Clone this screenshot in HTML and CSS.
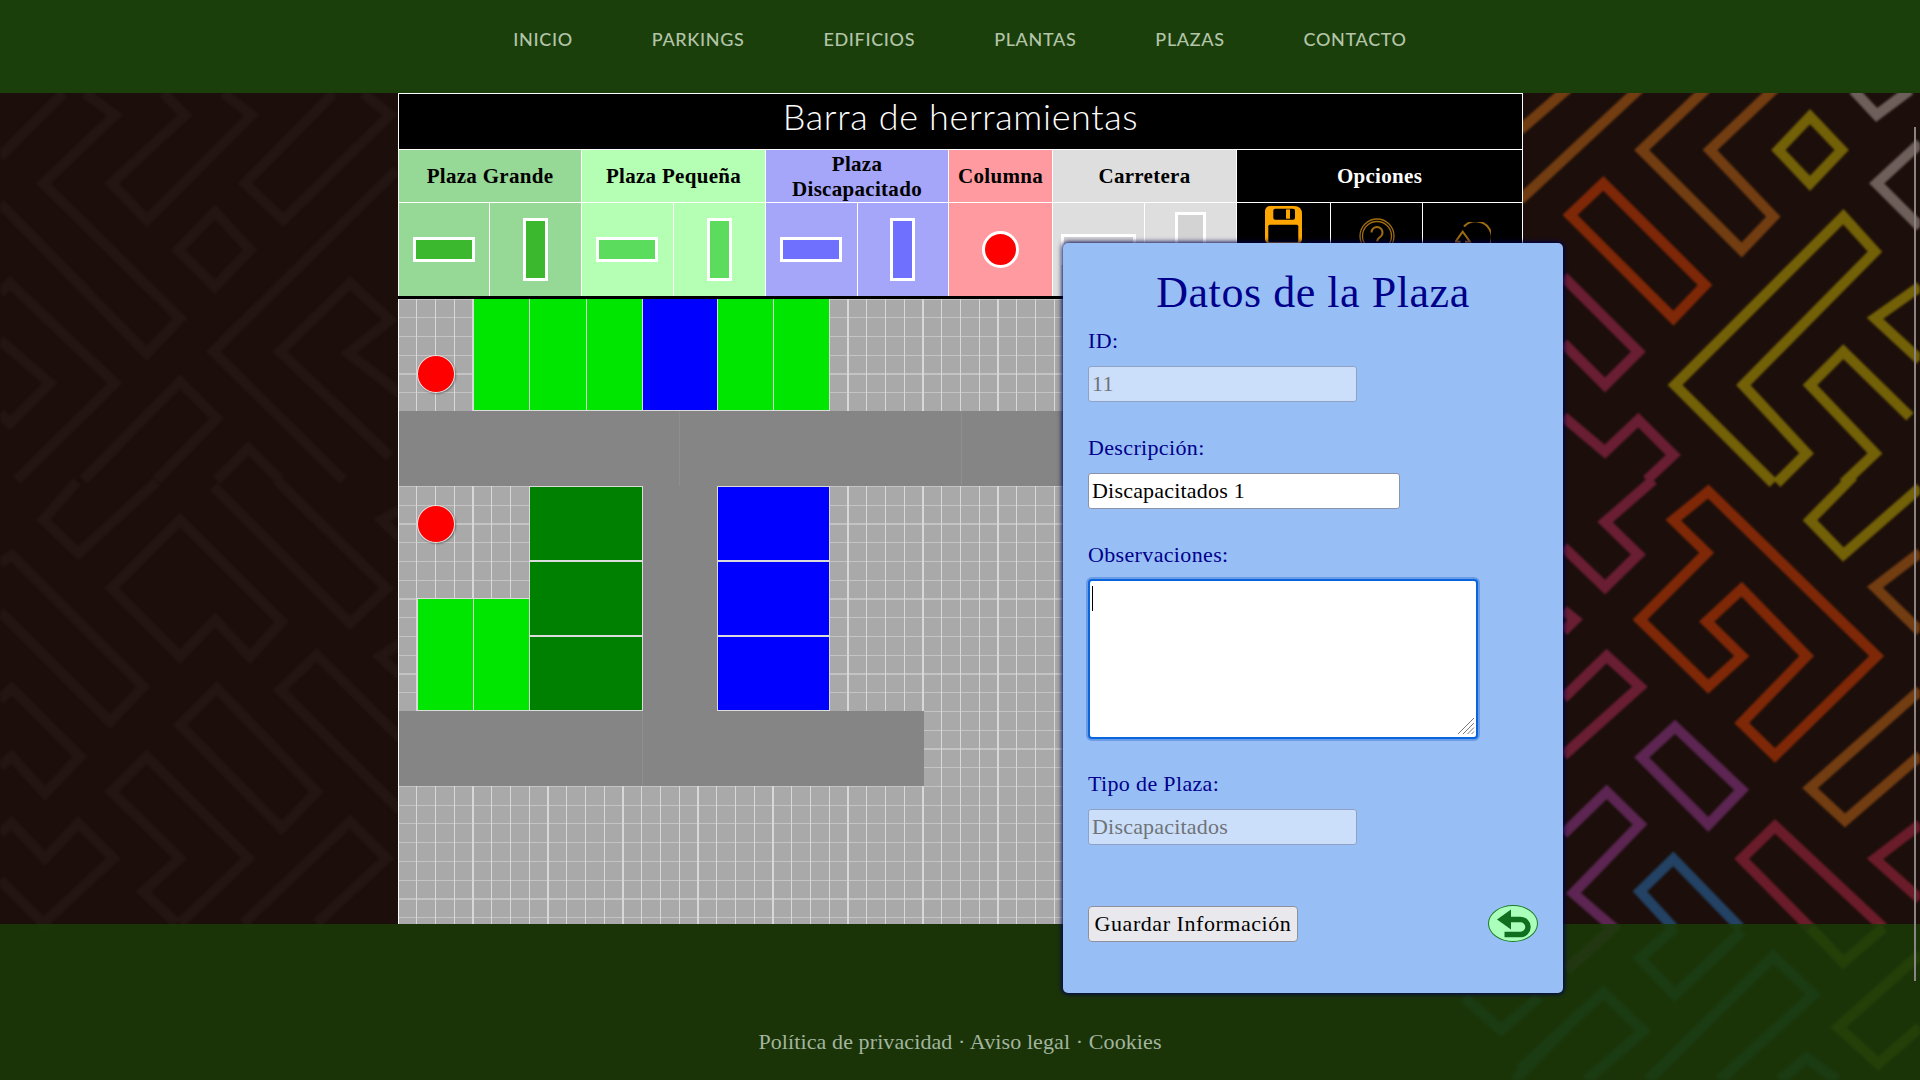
FILE: index.html
```html
<!DOCTYPE html>
<html lang="es">
<head>
<meta charset="utf-8">
<title>Datos de la Plaza</title>
<link rel="stylesheet" href="styles.css">
</head>
<body>
<svg class="pattern" width="1920" height="1080" viewBox="0 0 1920 1080" aria-hidden="true">
  <g class="faint" transform="translate(0 80) scale(.33333)">
    <polyline points="255,40 345,105 130,310 540,715 440,820 0,370"/>
    <polyline points="490,40 555,105 335,310 440,420 755,105 670,40"/>
    <polyline points="190,40 0,230"/>
    <polygon points="645,395 750,510 645,620 535,510"/>
    <polyline points="1000,40 735,310 850,420 1170,105 1090,40"/>
    <polyline points="1190,270 640,815 1030,1200"/>
    <polyline points="1200,940 1045,820 1170,720 1050,610 840,815 1170,1130"/>
    <polyline points="0,640 30,610 345,910 50,1200"/>
    <polyline points="0,780 150,910 30,1030 0,1000"/>
    <polyline points="250,1200 540,905 650,1015 470,1200"/>
    <polyline points="650,1200 745,1105 840,1200"/>
  </g>
  <g class="faint" transform="translate(0 480) scale(.33333)">
    <polyline points="230,5 130,120 235,220 470,5"/>
    <polyline points="0,250 35,225 430,620 330,725 0,395"/>
    <polygon points="540,120 335,325 540,530 645,420 750,530 845,425"/>
    <polyline points="640,20 1050,430 1160,325 830,0"/>
    <polyline points="1200,90 1145,120 1200,175"/>
    <polyline points="1200,990 840,630 950,525 1200,775"/>
    <polyline points="1200,490 1140,530 1200,585"/>
    <polygon points="650,625 540,735 845,1045 950,935"/>
    <polyline points="0,660 35,625 240,830 135,940 35,830 0,860"/>
    <polyline points="530,1330 430,1235 540,1135 335,935 440,830 745,1135 540,1330"/>
    <polyline points="730,1330 1050,1025 1160,1135 950,1330"/>
    <polyline points="0,1060 35,1030 135,1135 235,1030 340,1135 130,1330 0,1200"/>
  </g>
  <g transform="translate(1520 80) scale(.33333)">
    <polyline class="brown" points="565,20 365,210 665,510 760,410 570,210 770,20"/>
    <polyline class="brown" points="150,20 0,150"/>
    <polyline class="brown" points="365,20 0,360"/>
    <polygon class="red" points="250,310 150,405 460,715 555,615"/>
    <polygon class="olive" points="870,110 965,210 870,310 775,210"/>
    <polyline class="gray" points="1000,30 1070,105 1170,30"/>
    <polyline class="gray" points="1200,190 1070,310 1200,440"/>
    <polyline class="olive" points="770,1210 860,1120 670,915 1065,515 970,410 465,915 760,1210"/>
    <polyline class="olive" points="970,1210 1065,1120 870,915 970,815 1170,1010"/>
    <polyline class="olive" points="1200,620 1065,715 1200,840"/>
    <polyline class="magenta" points="130,590 355,815 255,915 130,790"/>
    <polyline class="magenta" points="130,1010 255,1115 355,1020 460,1125 380,1200"/>
  </g>
  <g transform="translate(1520 480) scale(.33333 .38265)">
    <polyline class="magenta" points="400,0 255,110 355,195 255,280 130,175"/>
    <polyline class="magenta" points="130,340 165,365 130,395"/>
    <polyline class="magenta" points="130,570 260,460 360,540 130,720"/>
    <polygon class="red" points="565,30 460,105 560,190 360,365 565,540 665,460 560,370 665,285 860,460 665,635 765,720 1070,460"/>
    <polyline class="olive" points="1000,-10 870,105 970,195 1200,20"/>
    <polyline class="brown" points="1200,190 1065,280 1200,395"/>
    <polyline class="brown" points="1200,550 870,805 975,890 1200,720"/>
    <polygon class="purple" points="465,645 365,725 565,900 665,810"/>
    <polyline class="purple" points="130,925 260,815 360,900 160,1080 280,1170 140,1280"/>
    <polyline class="blue" points="460,1170 360,1075 460,990 660,1170"/>
    <polyline class="darkred" points="870,1170 665,990 765,905 1090,1170"/>
    <polyline class="darkred" points="1200,900 1065,990 1200,1095"/>
    <polyline class="blue" points="465,1170 360,1250 465,1345 665,1180"/>
    <polyline class="blue" points="385,1568 760,1245 880,1345 600,1568"/>
    <polyline class="blue" points="0,1540 250,1340 370,1440 200,1568"/>
    <polyline class="blue" points="780,1568 860,1510 950,1568"/>
    <polyline class="olive" points="1200,1240 955,1430 1075,1525 1200,1430"/>
    <polyline class="olive" points="870,1170 970,1260 1090,1170"/>
  </g>
  <polyline class="blue" points="1464,997 1501,1030 1539,997"/>
  <polyline class="blue" points="1580,1013 1515,1080"/>
</svg>

<header class="site-header">
  <nav class="nav">
    <a class="nav-link">INICIO</a>
    <a class="nav-link">PARKINGS</a>
    <a class="nav-link">EDIFICIOS</a>
    <a class="nav-link">PLANTAS</a>
    <a class="nav-link">PLAZAS</a>
    <a class="nav-link">CONTACTO</a>
  </nav>
</header>

<main class="main">
  <section class="editor">
    <h1 class="toolbar-title">Barra de herramientas</h1>
    <div class="toolbar">
      <div class="head big span2">Plaza Grande</div>
      <div class="head small span2">Plaza Pequeña</div>
      <div class="head disabled span2">Plaza Discapacitado</div>
      <div class="head column">Columna</div>
      <div class="head road span2">Carretera</div>
      <div class="head options span3">Opciones</div>

      <div class="tool big"><span class="shape horiz fill-big"></span></div>
      <div class="tool big"><span class="shape vert fill-big"></span></div>
      <div class="tool small"><span class="shape horiz fill-small"></span></div>
      <div class="tool small"><span class="shape vert fill-small"></span></div>
      <div class="tool disabled"><span class="shape horiz fill-disabled"></span></div>
      <div class="tool disabled"><span class="shape vert fill-disabled"></span></div>
      <div class="tool column"><span class="shape dot"></span></div>
      <div class="tool road"><span class="shape road-h"></span></div>
      <div class="tool road"><span class="shape road-v"></span></div>
      <div class="tool options top">
        <svg class="icon-save" width="37" height="38" viewBox="0 0 37 38">
          <path class="save-body" d="M5 0H29Q37 0 37 8V33a5 5 0 0 1-5 5H5a5 5 0 0 1-5-5V5a5 5 0 0 1 5-5Z"/>
          <rect class="save-hole" x="8.3" y="2.7" width="21.7" height="11" rx="2"/>
          <rect class="save-body" x="21" y="3.4" width="4" height="9.3"/>
          <rect class="save-hole" x="3.3" y="18.7" width="30" height="17.5" rx="1.5"/>
        </svg>
      </div>
      <div class="tool options top">
        <svg class="icon-help" width="36" height="36" viewBox="0 0 36 36">
          <circle class="line" cx="18" cy="18" r="17"/>
          <circle class="line" cx="18" cy="18" r="14.5"/>
          <path class="line thick" d="M12.5 14.5a5.5 5.5 0 1 1 8.6 4.5c-2.2 1.5-3 2.400-3 4.500"/>
        </svg>
      </div>
      <div class="tool options top">
        <svg class="icon-reset" width="36" height="36" viewBox="0 0 36 36">
          <path class="line thick" d="M9 4.500A16 16 0 1 1 24 31"/>
          <path class="line thick" d="M7.700 9.700 .5 19.700H4.500V30H11V19.700H15Z"/>
        </svg>
      </div>
    </div>

    <div class="canvas">
      <div class="item road-item" style="--c:0;--r:6;--w:15;--h:4"></div>
      <div class="item road-item" style="--c:15;--r:6;--w:15;--h:4"></div>
      <div class="item road-item" style="--c:30;--r:6;--w:15;--h:4"></div>
      <div class="item road-item" style="--c:13;--r:10;--w:4;--h:12"></div>
      <div class="item road-item" style="--c:0;--r:22;--w:13;--h:4"></div>
      <div class="item road-item" style="--c:13;--r:22;--w:15;--h:4"></div>

      <div class="item bay lime" style="--c:4;--r:0;--w:3;--h:6"></div>
      <div class="item bay lime" style="--c:7;--r:0;--w:3;--h:6"></div>
      <div class="item bay lime" style="--c:10;--r:0;--w:3;--h:6"></div>
      <div class="item bay deep" style="--c:13;--r:0;--w:4;--h:6"></div>
      <div class="item bay lime" style="--c:17;--r:0;--w:3;--h:6"></div>
      <div class="item bay lime" style="--c:20;--r:0;--w:3;--h:6"></div>

      <div class="item bay green" style="--c:7;--r:10;--w:6;--h:4"></div>
      <div class="item bay green" style="--c:7;--r:14;--w:6;--h:4"></div>
      <div class="item bay green" style="--c:7;--r:18;--w:6;--h:4"></div>
      <div class="item bay deep" style="--c:17;--r:10;--w:6;--h:4"></div>
      <div class="item bay deep" style="--c:17;--r:14;--w:6;--h:4"></div>
      <div class="item bay deep" style="--c:17;--r:18;--w:6;--h:4"></div>
      <div class="item bay lime" style="--c:1;--r:16;--w:3;--h:6"></div>
      <div class="item bay lime" style="--c:4;--r:16;--w:3;--h:6"></div>

      <div class="item pillar" style="--c:1;--r:3;--w:2;--h:2"></div>
      <div class="item pillar" style="--c:1;--r:11;--w:2;--h:2"></div>
    </div>
  </section>

  <form class="modal">
    <h2 class="modal-title">Datos de la Plaza</h2>
    <div class="field">
      <label class="label" for="f-id">ID:</label>
      <input class="input input-short" id="f-id" value="11" disabled>
    </div>
    <div class="field">
      <label class="label" for="f-desc">Descripción:</label>
      <input class="input input-mid" id="f-desc" value="Discapacitados 1">
    </div>
    <div class="field field-area">
      <label class="label" for="f-obs">Observaciones:</label>
      <div class="area-wrap">
        <textarea class="area" id="f-obs"></textarea>
        <span class="caret"></span>
        <svg class="grip" width="18" height="18" viewBox="0 0 18 18">
          <path d="M1 17 17 1M6 17 17 6M10.500 17 17 10.500M14.500 17 17 14.500"/>
        </svg>
      </div>
    </div>
    <div class="field field-last">
      <label class="label" for="f-type">Tipo de Plaza:</label>
      <input class="input input-short" id="f-type" value="Discapacitados" disabled>
    </div>
    <div class="actions">
      <button class="save" type="button">Guardar Información</button>
      <button class="back" type="button" aria-label="Volver">
        <svg width="50" height="37" viewBox="0 0 50 37">
          <path class="back-arrow" d="M22 14.500H32.500a7.500 7.500 0 0 1 0 15H16.500"/>
          <polygon class="back-head" points="9,14.500 23,4.500 23,24.500"/>
        </svg>
      </button>
    </div>
  </form>
</main>

<footer class="site-footer">
  <p class="legal">Política de privacidad · Aviso legal · Cookies</p>
</footer>

<div class="scroll-line"></div>
</body>
</html>
```

FILE: styles.css
```css
* { box-sizing: border-box; }

html, body { margin: 0; padding: 0; }

body {
  position: relative;
  width: 1920px;
  height: 1080px;
  overflow: hidden;
  display: flex;
  flex-direction: column;
  background: #1c0f0b;
  font-family: "Liberation Serif", serif;
}

/* background maze */
.pattern {
  position: absolute;
  left: 0;
  top: 0;
  filter: blur(1px);
}
.pattern polyline, .pattern polygon {
  fill: none;
  stroke-width: 10.5px;
  vector-effect: non-scaling-stroke;
  stroke-linejoin: miter;
}
.faint polyline, .faint polygon { stroke: #231512; }
.brown { stroke: #733d12; }
.red { stroke: #7f2808; }
.olive { stroke: #736108; }
.gray { stroke: #6e5f5b; }
.magenta { stroke: #6a1e33; }
.purple { stroke: #5c2552; }
.blue { stroke: #234264; }
.darkred { stroke: #6b1c2a; }

/* header */
.site-header {
  position: relative;
  flex: 0 0 93px;
  background: #1a3f0a;
}
.nav {
  display: flex;
  justify-content: center;
  gap: 79px;
  padding-top: 28px;
}
.nav-link {
  font-family: Lato, sans-serif;
  font-size: 18px;
  line-height: 22px;
  font-weight: 500;
  letter-spacing: .65px;
  color: #b3c4a9;
}

/* main */
.main {
  position: relative;
  z-index: 1;
  flex: 1 1 auto;
  min-height: 0;
  padding-left: 398px;
}
.editor {
  width: 1125px;
  height: 100%;
  display: flex;
  flex-direction: column;
  border-top: 1px solid #fff;
  border-right: 1px solid #fff;
  background: #000;
}
.toolbar-title {
  margin: 0;
  height: 56px;
  flex: none;
  border-left: 1px solid #fff;
  border-bottom: 1px solid #fff;
  text-align: center;
  font-family: Lato, sans-serif;
  font-weight: 300;
  font-size: 36px;
  line-height: 44px;
  letter-spacing: .65px;
  color: #fff;
  background: #000;
}
.toolbar {
  flex: none;
  display: grid;
  grid-template-columns: 91px 92px 92px 92px 92px 91px 104px 92px 92px 94px 92px 100px;
  grid-template-rows: 53px 93px;
  border-bottom: 3px solid #000;
  height: 149px;
}
.head {
  display: flex;
  align-items: center;
  justify-content: center;
  text-align: center;
  font-size: 21px;
  line-height: 25px;
  font-weight: 700;
  letter-spacing: .3px;
  color: #000;
  border-left: 1px solid #fff;
  border-bottom: 1px solid #fff;
  padding: 0 12px;
}
.head.disabled { padding-top: 1px; }
.column.head { padding: 0; }
.span2 { grid-column: span 2; }
.span3 { grid-column: span 3; }
.tool {
  display: flex;
  align-items: center;
  justify-content: center;
  border-left: 1px solid #fff;
}
.tool.top { align-items: flex-start; }
.big { background: #96d896; }
.small { background: #b4ffb4; }
.disabled { background: #a5a5fa; }
.column { background: #ff9aa0; }
.road { background: #dedede; }
.options { background: #000; color: #fff; }

.shape { display: block; border: 3px solid #fff; }
.tool.small .shape, .tool.disabled .shape { margin-left: -1px; }
.horiz { width: 62px; height: 25px; }
.vert { width: 25px; height: 63px; }
.fill-big { background: #3cb82f; }
.fill-small { background: #5cdc5c; }
.fill-disabled { background: #7070ff; }
.dot { width: 37px; height: 37px; border-radius: 50%; background: #f00; }
.road-h { width: 75px; height: 31px; background: #d3d3d3; }
.road-v { width: 31px; height: 75px; background: #d3d3d3; }

.save-body { fill: #ffa500; }
.save-hole { fill: #000; }
.icon-save { margin-top: 3px; }
.icon-help { margin-top: 15px; }
.icon-reset { margin-top: 19px; }
.line { fill: none; stroke: #a06c10; stroke-width: 1.3; }
.line.thick { stroke-width: 2; }

/* free canvas of the parking */
.canvas {
  position: relative;
  flex: 1 1 auto;
  min-height: 0;
  overflow: hidden;
  border-left: 1px solid #fff;
  background-color: #a9a9a9;
  background-image:
    repeating-linear-gradient(to right, #d8d8d8 -.5px, #d8d8d8 .5px, transparent .5px, transparent 18.25px),
    repeating-linear-gradient(to bottom, #c4c4c4 -.5px, #c4c4c4 .5px, transparent .5px, transparent 18.25px);
  background-position: -1px 0, 0 0;
}
.item {
  position: absolute;
  left: calc(var(--c) * 18.75px - 1px);
  top: calc(var(--r) * 18.75px - .75px);
  width: calc(var(--w) * 18.75px + 1px);
  height: calc(var(--h) * 18.75px + .5px);
}
.road-item {
  background: #858585;
  border-left: 1px solid #8e8e8e;
}
.bay { border: 1px solid #dcdcdc; }
.lime { background: #00e600; }
.deep { background: #0000ff; }
.green { background: #008000; }
.pillar {
  border-radius: 50%;
  background: #f00;
  border: 1px solid #e6e6e6;
  box-shadow: 1px 1px 2px rgba(0, 0, 0, .35);
}

/* modal */
.modal {
  position: absolute;
  left: 1063px;
  top: 150px;
  width: 500px;
  height: 750px;
  padding: 0 25px;
  background: #97bff5;
  border-radius: 5px;
  box-shadow: 0 0 5px 1px #00004e;
}
.modal-title {
  margin: 0;
  height: 86px;
  padding-top: 25px;
  text-align: center;
  font-weight: 400;
  font-size: 44px;
  line-height: 50px;
  letter-spacing: .55px;
  color: #00008b;
}
.field { margin-bottom: 34px; }
.field-area { margin-bottom: 33px; }
.field-last { margin-bottom: 60px; }
.label {
  display: block;
  margin-bottom: 13px;
  font-size: 22px;
  line-height: 24px;
  letter-spacing: .35px;
  color: #00008b;
}
.input {
  display: block;
  height: 36px;
  padding: 0 3px;
  border: 1px solid #8a93a8;
  border-radius: 3px;
  background: #fff;
  color: #000;
  font-family: "Liberation Serif", serif;
  font-size: 22px;
  letter-spacing: .2px;
}
.input:disabled {
  background: #cbdffa;
  border-color: #8fa2c6;
  color: #6f7378;
  opacity: 1;
}
.input-short { width: 269px; }
.input-mid { width: 312px; }
.area-wrap {
  position: relative;
  width: 390px;
  height: 160px;
  margin-top: -1px;
}
.area {
  display: block;
  width: 100%;
  height: 100%;
  resize: none;
  border: 2px solid #0a64dc;
  border-radius: 4px;
  background: #fff;
  outline: none;
  box-shadow: 0 0 0 2px #6a9be6;
}
.caret {
  position: absolute;
  left: 4px;
  top: 7px;
  width: 1px;
  height: 25px;
  background: #000;
}
.grip {
  position: absolute;
  right: 3px;
  bottom: 4px;
}
.grip path { fill: none; stroke: #7a7a7a; stroke-width: 1; }
.actions {
  display: flex;
  align-items: center;
  justify-content: space-between;
}
.save {
  width: 210px;
  height: 36px;
  padding: 0;
  border: 1px solid #8f8f9d;
  border-radius: 4px;
  background: #e9e9ed;
  color: #000;
  font-family: "Liberation Serif", serif;
  font-size: 22px;
  letter-spacing: .55px;
}
.back {
  width: 50px;
  height: 37px;
  padding: 0;
  border: 1px solid #1a7a25;
  border-radius: 50%;
  background: #aaffbb;
  overflow: hidden;
}
.back svg { display: block; margin: -1px; }
.back-arrow { fill: none; stroke: #106f1f; stroke-width: 5.5; }
.back-head { fill: #106f1f; }

/* footer */
.site-footer {
  position: relative;
  z-index: 0;
  flex: 0 0 156px;
  background: rgba(26, 58, 8, .88);
}
.legal {
  margin: 0;
  padding-top: 105px;
  text-align: center;
  font-size: 22px;
  line-height: 26px;
  letter-spacing: .1px;
  color: #a3b59f;
}
.scroll-line {
  position: absolute;
  left: 1914px;
  top: 127px;
  width: 2px;
  height: 854px;
  background: #8a8583;
  z-index: 2;
}
```
